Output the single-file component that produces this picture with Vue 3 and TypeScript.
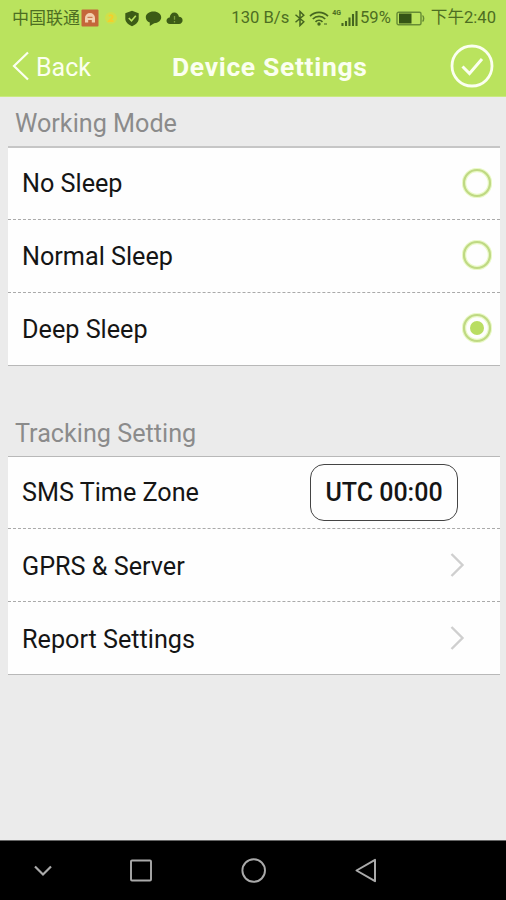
<script setup lang="ts">
import { ref } from 'vue'

const modes: string[] = ['No Sleep', 'Normal Sleep', 'Deep Sleep']
const selected = ref<string>('Deep Sleep')
const links: string[] = ['GPRS & Server', 'Report Settings']
</script>

<template>
  <div class="screen">
    <header class="header">
      <div class="status">
        <div class="status-left">
          <span class="carrier">中国联通</span>
          <svg class="app-badge" width="18" height="18" viewBox="0 0 18 18">
            <rect x="0.5" y="0.5" width="17" height="17" rx="1" fill="#c4663a" />
            <path d="M4 13.500V9a5 5 0 0 1 10 0v4.500h-3.200V11H7.200v2.500z" fill="#f3cfae" />
            <path d="M6.500 8.300h5" stroke="#c4663a" stroke-width="1" />
          </svg>
          <svg class="moon" width="14" height="14" viewBox="0 0 14 14">
            <circle cx="7" cy="7" r="6" fill="#cfe04a" />
            <path d="M5 5.200c1-1.800 4-1 3.500 1C8 7.800 6 8.500 5 10h4.500" fill="none" stroke="#f3cf2c" stroke-width="1.800" />
          </svg>
          <svg class="shield" width="16" height="17" viewBox="0 0 16 17">
            <path d="M8 .8 14.700 3.200V8.500c0 3.500-2.700 6-6.700 7.800-4-1.800-6.700-4.300-6.700-7.800V3.200z" fill="#3c5c16" />
            <path d="m4.800 8 2.700 2.700 4.300-5" fill="none" stroke="#b9e35c" stroke-width="1.600" />
          </svg>
          <svg class="bubble" width="17" height="17" viewBox="0 0 17 17">
            <path d="M8.500 1.500C13 1.500 16.200 4 16.200 7.300c0 3.200-3 5.800-7 6L4.800 16v-3.400C2.300 11.700.8 9.800.8 7.300.8 4 4 1.500 8.500 1.500z" fill="#3c5c16" />
          </svg>
          <svg class="cloud" width="17" height="14" viewBox="0 0 17 14">
            <path d="M4 13C1.800 13 .5 11.600.5 9.800c0-1.900 1.400-3.100 3.200-3.200C4 3.500 5.800 1.500 8.300 1.500c2.500 0 4.200 1.700 4.600 4.300 2.200.1 3.700 1.500 3.700 3.500S15.200 13 13 13z" fill="#3c5c16" />
            <path d="M8.500 5v3.700M8.500 10v1.500" stroke="#7b9e3c" stroke-width="1.300" />
          </svg>
        </div>
        <div class="status-right">
          <span class="speed">130 B/s</span>
          <svg class="bluetooth" width="12" height="17" viewBox="0 0 12 17">
            <path d="m1.500 4.800 8.300 7L6 15.500v-14l3.800 3.700-8.300 7" fill="none" stroke="#456620" stroke-width="1.500" />
          </svg>
          <svg class="wifi" width="20" height="17" viewBox="0 0 20 17">
            <g fill="none" stroke="#456620" stroke-width="1.700">
              <path d="M1 6.200c5-5 13-5 18 0" />
              <path d="M3.800 9c3.500-3.500 9-3.500 12.400 0" />
              <path d="M6.500 11.800c2-2 5-2 7 0" />
            </g>
            <circle cx="10" cy="14" r="1.700" fill="#456620" />
            <path d="M15 14h3" stroke="#66883a" stroke-width="1.500" />
          </svg>
          <span class="generation">4G</span>
          <svg class="signal" width="17" height="16" viewBox="0 0 17 16">
            <path d="M1.500 16v-3M5 16v-5M8.500 16V7.500M12 16V4M15.500 16V1" stroke="#456620" stroke-width="2.100" />
          </svg>
          <span class="percent">59%</span>
          <svg class="battery" width="29" height="15" viewBox="0 0 29 15">
            <rect x="1" y="1.200" width="24" height="12.500" rx="1.500" fill="none" stroke="#668b35" stroke-width="1.400" />
            <rect x="3" y="2.500" width="12.500" height="10" fill="#355516" />
            <path d="M26.500 4.500c1.500 1 1.500 5 0 6" fill="none" stroke="#668b35" stroke-width="1.500" />
          </svg>
          <span class="clock">下午2:40</span>
        </div>
      </div>
      <nav class="nav">
        <button class="back" type="button">
          <svg width="17" height="30" viewBox="0 0 17 30">
            <path d="M16 1.500 2 15l14 13.500" fill="none" stroke="#fbfff0" stroke-width="2.200" />
          </svg>
          <span class="back-label">Back</span>
        </button>
        <h1 class="title">Device Settings</h1>
        <button class="confirm" type="button" aria-label="Save">
          <svg width="44" height="44" viewBox="0 0 44 44">
            <circle cx="22" cy="22" r="20" fill="none" stroke="#fbfff0" stroke-width="2.800" />
            <path d="m12.500 22.500 7 7L32 15" fill="none" stroke="#fbfff0" stroke-width="3" />
          </svg>
        </button>
      </nav>
    </header>

    <main class="content">
      <h2 class="section working">Working Mode</h2>
      <div class="list">
        <div v-for="mode in modes" :key="mode" class="row" @click="selected = mode">
          <span class="label">{{ mode }}</span>
          <svg class="radio" width="30" height="30" viewBox="0 0 30 30">
            <circle cx="15" cy="15" r="13" fill="none" stroke="#eaf9c8" stroke-width="4.500" />
            <circle cx="15" cy="15" r="13" fill="none" stroke="#bfd983" stroke-width="2.200" />
            <circle v-if="selected === mode" cx="15" cy="15" r="7" fill="#b9dd62" />
          </svg>
        </div>
      </div>

      <h2 class="section tracking">Tracking Setting</h2>
      <div class="list links">
        <div class="row">
          <span class="label">SMS Time Zone</span>
          <button class="zone" type="button">UTC 00:00</button>
        </div>
        <div v-for="link in links" :key="link" class="row">
          <span class="label">{{ link }}</span>
          <svg class="chevron" width="15" height="26" viewBox="0 0 15 26">
            <path d="m1.500 2 11 11-11 11" fill="none" stroke="#cfcfcf" stroke-width="2.400" />
          </svg>
        </div>
      </div>
    </main>

    <footer class="system-bar">
      <svg class="key" width="20" height="24" viewBox="0 0 20 24">
        <path d="m2 7.500 8 8 8-8" fill="none" stroke="#aaa" stroke-width="2.200" />
      </svg>
      <svg class="key" width="24" height="24" viewBox="0 0 24 24">
        <rect x="2" y="1.500" width="20" height="20" rx="1" fill="none" stroke="#aaa" stroke-width="1.900" />
      </svg>
      <svg class="key" width="26" height="26" viewBox="0 0 26 26">
        <circle cx="12.700" cy="12.500" r="11.300" fill="none" stroke="#aaa" stroke-width="1.900" />
      </svg>
      <svg class="key" width="24" height="26" viewBox="0 0 24 26">
        <path d="M21 1.800v21.400L2.500 12.500z" fill="none" stroke="#aaa" stroke-width="2" stroke-linejoin="round" />
      </svg>
    </footer>
  </div>
</template>

<style>
body {
  margin: 0;
}
</style>

<style scoped>
.screen {
  display: flex;
  flex-direction: column;
  width: 506px;
  height: 900px;
  overflow: hidden;
  background: #ebebeb;
  font-family: Roboto, 'Noto Sans CJK SC', sans-serif;
}

button {
  margin: 0;
  padding: 0;
  border: 0;
  background: none;
  color: inherit;
  font-family: inherit;
}

svg {
  display: block;
  flex: none;
}

.header {
  flex: none;
  box-sizing: border-box;
  height: 97px;
  background: #bae35e;
  border-bottom: 1px solid #c9ea80;
}

.status {
  display: flex;
  justify-content: space-between;
  height: 36px;
  padding: 0 10px 0 12px;
  color: #4d6e22;
  font-size: 16.600px;
  line-height: 36px;
  white-space: nowrap;
}

.status-left,
.status-right {
  display: flex;
  align-items: center;
}

.carrier {
  font-size: 17px;
}

.app-badge {
  margin-left: 1px;
}

.moon {
  margin-left: 5px;
}

.shield {
  margin-left: 6px;
}

.bubble {
  margin-left: 5px;
}

.cloud {
  margin-left: 4px;
}

.bluetooth {
  margin-left: 5px;
}

.wifi {
  margin-left: 3px;
}

.generation {
  margin: -10px 0 0 3px;
  font-size: 7px;
  font-weight: 700;
}

.percent {
  margin-left: 2px;
}

.battery {
  margin-left: 5px;
}

.clock {
  margin-left: 6px;
}

.nav {
  display: grid;
  grid-template-columns: 120px 1fr 120px;
  align-items: center;
  height: 60px;
  padding: 0 12px;
  color: #fbfff0;
}

.back {
  display: flex;
  align-items: center;
  gap: 7px;
}

.back-label {
  padding-top: 3px;
  font-size: 25px;
  line-height: 30px;
}

.title {
  margin: 2px 0 0 40px;
  font-size: 26.500px;
  font-weight: 700;
  line-height: 30px;
  letter-spacing: 0.650px;
  white-space: nowrap;
}

.confirm {
  justify-self: end;
}

.content {
  flex: 1;
  padding: 0 6px 0 8px;
}

.section {
  box-sizing: border-box;
  margin: 0;
  padding-left: 7px;
  color: #8b8b8b;
  font-size: 25.200px;
  font-weight: 400;
  line-height: 30px;
  white-space: nowrap;
}

.working {
  height: 49px;
  padding-top: 12px;
}

.tracking {
  height: 90px;
  padding-top: 53px;
}

.list {
  background: #fefefe;
  border-top: 2px solid #c6c6c6;
  border-bottom: 1px solid #b8b8b8;
}

.links {
  border-top: 1px solid #b8b8b8;
}

.row {
  display: flex;
  align-items: center;
  justify-content: space-between;
  box-sizing: border-box;
  height: 73px;
  padding: 0 8px 0 14px;
}

.row:first-child {
  height: 71px;
}

.row + .row {
  border-top: 1px dashed #aaa;
}

.label {
  color: #151515;
  font-size: 25.200px;
  line-height: 30px;
  white-space: nowrap;
}

.row + .row .label {
  padding-top: 2px;
}

.links .label {
  padding-top: 1px;
}

.links .row + .row .label {
  padding-top: 3px;
}

.radio {
  margin-bottom: 2px;
}

.zone {
  box-sizing: border-box;
  width: 148px;
  height: 57px;
  margin-right: 34px;
  border: 1.500px solid #444;
  border-radius: 14px;
  color: #151515;
  font-size: 25px;
  font-weight: 500;
  white-space: nowrap;
}

.chevron {
  margin-right: 27px;
}

.system-bar {
  flex: none;
  display: grid;
  grid-template-columns: 86px 110px 116px 108px;
  align-items: center;
  justify-items: center;
  box-sizing: border-box;
  height: 60px;
  background: #000;
  border-top: 1px solid #666;
}
</style>
